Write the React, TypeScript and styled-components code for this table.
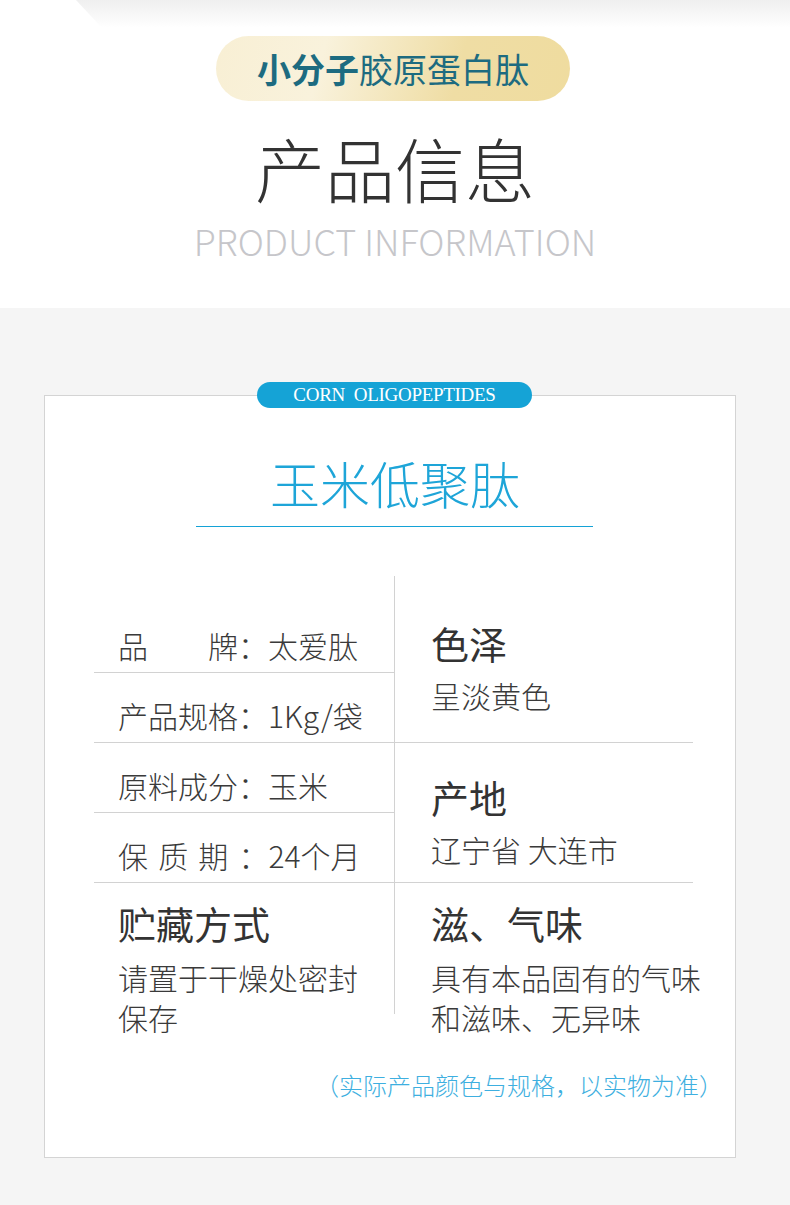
import React from "react";
import styled, { createGlobalStyle } from "styled-components";

const GlobalStyle = createGlobalStyle`
  body {
    margin: 0;
    background: #f5f5f5;
    font-family: "Noto Sans CJK SC", "Noto Sans", sans-serif;
  }
`;

const Page = styled.div`
  width: 790px;
  min-height: 1205px;
  background: #f5f5f5;
`;

const Header = styled.div`
  position: relative;
  background: #fff;
  height: 308px;
  padding-top: 36px;
  box-sizing: border-box;
  display: flex;
  flex-direction: column;
  align-items: center;

  &::before {
    content: "";
    position: absolute;
    top: 0;
    left: 76px;
    right: 0;
    height: 28px;
    background: linear-gradient(#efefef, rgba(255, 255, 255, 0));
    clip-path: polygon(0 0, 100% 0, 100% 100%, 26px 100%);
  }
`;

const Tag = styled.div`
  position: relative;
  height: 65px;
  width: 354px;
  margin-left: -4px;
  border-radius: 33px;
  background: linear-gradient(105deg, #f8efd4 0%, #f9f2dc 30%, #efdda4 68%, #efdc9f 100%);
  display: flex;
  align-items: center;
  justify-content: center;
  color: #1d6b80;
  font-size: 34px;
  line-height: 34px;
  font-weight: 400;

  b {
    font-weight: 700;
  }
`;

const Title = styled.div`
  margin-top: 32px;
  font-size: 70px;
  line-height: 70px;
  font-weight: 300;
  color: #333;
`;

const Subtitle = styled.div`
  margin-top: 19px;
  font-size: 36px;
  line-height: 36px;
  font-weight: 300;
  color: #c6c6ca;
`;

const Section = styled.div`
  padding: 87px 54px 47px 44px;
`;

const Card = styled.div`
  position: relative;
  width: 692px;
  box-sizing: border-box;
  background: #fff;
  border: 1px solid #d4d4d4;
  padding: 61px 0 60px;
  display: flex;
  flex-direction: column;
`;

const Badge = styled.div`
  position: absolute;
  top: -14px;
  left: 212px;
  width: 275px;
  height: 26px;
  border-radius: 13px;
  background: #15a3d6;
  color: #fff;
  font-family: "Liberation Serif", serif;
  font-size: 19px;
  line-height: 26px;
  letter-spacing: -0.3px;
  white-space: pre;
  text-align: center;
`;

const Name = styled.div`
  text-align: center;
  font-size: 50px;
  line-height: 50px;
  font-weight: 300;
  color: #1ea5d8;
  padding-left: 10px;
`;

const Rule = styled.div`
  margin: 19px auto 0;
  width: 397px;
  height: 1px;
  background: #14a2d6;
  transform: translateX(4px);
`;

const Table = styled.div`
  margin: 49px 0 0 49px;
  width: 599px;
`;

const Row = styled.div<{ $open?: boolean }>`
  display: grid;
  grid-template-columns: 301px 298px;
  border-bottom: ${(p) => (p.$open ? "none" : "1px solid #d2d2d2")};
  background: ${(p) =>
    p.$open ? "linear-gradient(#d2d2d2, #d2d2d2) 300px 0 / 1px 131px no-repeat" : "none"};
`;

const LeftCell = styled.div`
  border-right: 1px solid #d2d2d2;
  display: flex;
  flex-direction: column;
`;

const Item = styled.div<{ $h: number; $line?: boolean; $spaced?: boolean }>`
  height: ${(p) => p.$h}px;
  box-sizing: border-box;
  display: flex;
  align-items: flex-end;
  padding: 0 0 12px 24px;
  border-bottom: ${(p) => (p.$line ? "1px solid #d2d2d2" : "none")};
  font-size: 30px;
  line-height: 30px;
  font-weight: 300;
  color: #3a3a3a;
  white-space: pre;
  word-spacing: ${(p) => (p.$spaced ? "3.5px" : "normal")};
`;

const InfoCell = styled.div<{ $top?: number; $left?: number }>`
  display: flex;
  flex-direction: column;
  justify-content: ${(p) => (p.$top !== undefined ? "flex-start" : "center")};
  padding: ${(p) => (p.$top !== undefined ? `${p.$top}px` : "16px")} 0 0
    ${(p) => p.$left ?? 36}px;
`;

const InfoTitle = styled.div`
  font-size: 38px;
  line-height: 38px;
  font-weight: 400;
  color: #333;
`;

const InfoText = styled.div<{ $gap?: number }>`
  margin-top: ${(p) => p.$gap ?? 18}px;
  font-size: 30px;
  line-height: ${(p) => (p.$gap ? 40 : 30)}px;
  font-weight: 300;
  color: #3a3a3a;
  white-space: nowrap;
`;

const Note = styled.div`
  margin-top: 36px;
  padding-right: 12px;
  text-align: right;
  font-size: 24px;
  line-height: 24px;
  font-weight: 300;
  color: #3eafe0;
`;

export default function App() {
  return (
    <>
      <GlobalStyle />
      <Page>
        <Header>
          <Tag>
            <span>
              <b>小分子</b>胶原蛋白肽
            </span>
          </Tag>
          <Title>产品信息</Title>
          <Subtitle>PRODUCT INFORMATION</Subtitle>
        </Header>
        <Section>
          <Card>
            <Badge>{"CORN  OLIGOPEPTIDES"}</Badge>
            <Name>玉米低聚肽</Name>
            <Rule />
            <Table>
              <Row>
                <LeftCell>
                  <Item $h={97} $line>
                    品　　牌：太爱肽
                  </Item>
                  <Item $h={69}>产品规格：1Kg/袋</Item>
                </LeftCell>
                <InfoCell>
                  <InfoTitle>色泽</InfoTitle>
                  <InfoText>呈淡黄色</InfoText>
                </InfoCell>
              </Row>
              <Row>
                <LeftCell>
                  <Item $h={70} $line>
                    原料成分：玉米
                  </Item>
                  <Item $h={69} $spaced>
                    保 质 期 ：24个月
                  </Item>
                </LeftCell>
                <InfoCell>
                  <InfoTitle>产地</InfoTitle>
                  <InfoText>辽宁省 大连市</InfoText>
                </InfoCell>
              </Row>
              <Row $open>
                <InfoCell $top={21} $left={24}>
                  <InfoTitle>贮藏方式</InfoTitle>
                  <InfoText $gap={15}>
                    请置于干燥处密封
                    <br />
                    保存
                  </InfoText>
                </InfoCell>
                <InfoCell $top={21} $left={36}>
                  <InfoTitle>滋、气味</InfoTitle>
                  <InfoText $gap={15}>
                    具有本品固有的气味
                    <br />
                    和滋味、无异味
                  </InfoText>
                </InfoCell>
              </Row>
            </Table>
            <Note>（实际产品颜色与规格，以实物为准）</Note>
          </Card>
        </Section>
      </Page>
    </>
  );
}
